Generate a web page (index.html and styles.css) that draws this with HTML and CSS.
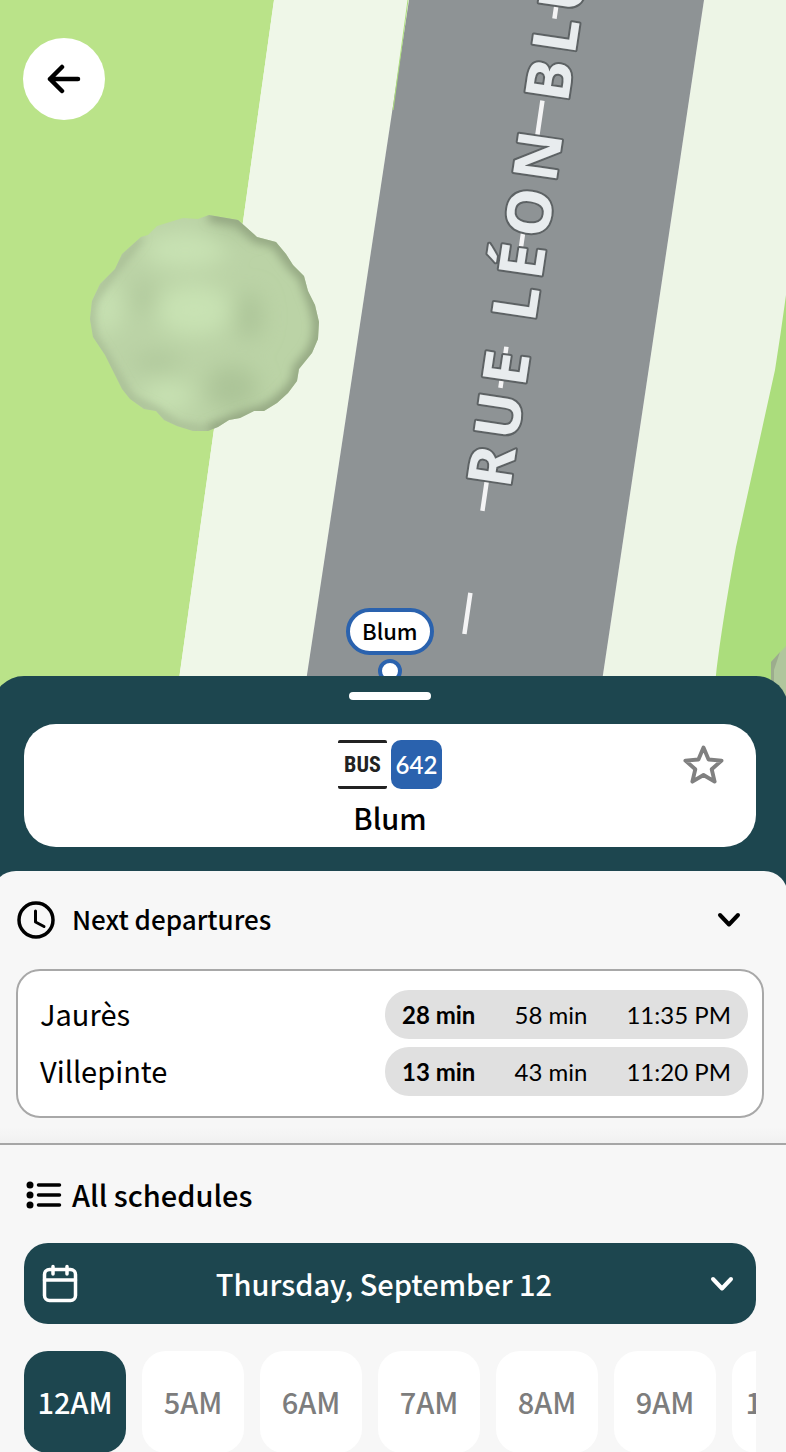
FILE: index.html
```html
<!DOCTYPE html>
<html lang="en">
<head>
<meta charset="utf-8">
<meta name="viewport" content="width=device-width, initial-scale=1">
<title>Blum – Bus 642</title>
<link rel="stylesheet" href="styles.css">
</head>
<body>
<main class="app">
  <section class="map" aria-label="Map">
    <svg class="map-canvas" viewBox="0 0 786 708" aria-hidden="true">
      <defs>
        <filter id="soft" x="-50%" y="-50%" width="200%" height="200%"><feGaussianBlur stdDeviation="11"/></filter>
        <filter id="rim" x="-10%" y="-10%" width="120%" height="120%"><feGaussianBlur stdDeviation="5"/></filter>
        <clipPath id="crown"><path d="M209 215L238 220L257 237L276 242L286 254L293 265L304 276L308 291L315 305L319 322L318 339L312 353L299 369L297 381L288 393L277 403L264 411L254 411L240 418L229 420L218 427L208 431L193 431L177 426L164 420L156 411L144 409L130 399L122 389L105 355L93 337L90 319L92 301L100 284L115 269L122 254L141 237L148 235L157 226L183 218L198 219Z"/></clipPath>
      </defs>
      <path class="grass" d="M0 0H274L175 708H0Z"/>
      <path class="path-left" d="M274 0H409L302 708H175Z"/>
      <path class="path-right" d="M704 0H786V708H598Z"/>
      <path class="grass-right" d="M786 295Q781 332 775 370L736 547C728 590 720 640 716 675L712 708H786Z"/>
      <path class="road" d="M409 0H704L598 708H302Z"/>
      <path class="verge" d="M408 0L393 110"/>
      <path class="lane" d="M464.4 634L563 -40"/>
      <g clip-path="url(#crown)">
        <rect class="leaf" x="85" y="210" width="240" height="226"/>
        <g filter="url(#soft)">
          <ellipse class="leaf-light" cx="185" cy="250" rx="42" ry="18"/>
          <ellipse class="leaf-light" cx="194" cy="310" rx="38" ry="26"/>
          <ellipse class="leaf-light" cx="107" cy="308" rx="14" ry="26"/>
          <ellipse class="leaf-light" cx="168" cy="396" rx="26" ry="14"/>
          <ellipse class="leaf-dark" cx="249" cy="316" rx="13" ry="24"/>
          <ellipse class="leaf-dark" cx="232" cy="388" rx="26" ry="22"/>
          <ellipse class="leaf-dark" cx="145" cy="298" rx="8" ry="16"/>
          <ellipse class="leaf-dark" cx="157" cy="362" rx="24" ry="7"/>
          <ellipse class="leaf-dark" cx="232" cy="224" rx="26" ry="10"/>
        </g>
        <path class="leaf-rim" filter="url(#rim)" d="M209 215L238 220L257 237L276 242L293 265L304 276L315 305L319 322L318 339L312 353L299 369L297 381L288 393L277 403L264 411L240 418L208 431"/>
        <path class="leaf-rim-thin" filter="url(#rim)" d="M208 431L177 426L156 411L130 399L105 355L93 337L90 319L92 301L115 269L141 237"/>
      </g>
      <path class="leaf-small" d="M786 646L771 662V686L786 700Z"/>
      <path class="leaf-small-shade" d="M780 652L771 662V686L774 689V670Z"/>
      <text class="street" transform="translate(510 489) rotate(-81.5)">RUE LÉON BLUM</text>
    </svg>
    <button class="back" type="button" aria-label="Back">
      <svg class="icon-arrow" viewBox="0 0 34 30" aria-hidden="true"><path d="M31 15H3M15 3L3 15L15 27"/></svg>
    </button>
    <div class="pin">
      <span class="pin-label">Blum</span>
      <span class="pin-dot"></span>
    </div>
  </section>

  <section class="sheet">
    <div class="handle"></div>
    <header class="stop">
      <div class="line">
        <span class="mode">BUS</span>
        <span class="number">642</span>
      </div>
      <h1 class="stop-name">Blum</h1>
      <button class="favorite" type="button" aria-label="Add to favorites">
        <svg class="icon-star" viewBox="0 0 42 40" aria-hidden="true"><path d="M21 2.5L26.2 14.8L39.5 16L29.4 24.8L32.4 37.5L21 30.7L9.6 37.5L12.6 24.8L2.5 16L15.8 14.8Z"/></svg>
      </button>
    </header>

    <div class="panel">
      <section class="next">
        <h2 class="section-title">
          <button class="toggle" type="button" aria-expanded="true">
            <svg class="icon-clock" viewBox="0 0 38 38" aria-hidden="true"><circle cx="19" cy="19" r="17"/><path d="M18.5 10V21L27 25.5"/></svg>
            <span class="toggle-text">Next departures</span>
            <svg class="icon-chevron" viewBox="0 0 24 16" aria-hidden="true"><path d="M3 3L12 12.5L21 3"/></svg>
          </button>
        </h2>
        <ul class="departures">
          <li class="departure">
            <span class="destination">Jaurès</span>
            <span class="times"><strong>28 min</strong><span>58 min</span><span>11:35 PM</span></span>
          </li>
          <li class="departure">
            <span class="destination">Villepinte</span>
            <span class="times"><strong>13 min</strong><span>43 min</span><span>11:20 PM</span></span>
          </li>
        </ul>
      </section>

      <section class="schedules">
        <h2 class="schedules-title">
          <svg class="icon-list" viewBox="0 0 36 30" aria-hidden="true"><circle cx="4" cy="5" r="3.5"/><circle cx="4" cy="15" r="3.5"/><circle cx="4" cy="25" r="3.5"/><path d="M12.5 5H33.5M12.5 15H33.5M12.5 25H33.5"/></svg>
          <span class="schedules-text">All schedules</span>
        </h2>
        <button class="date" type="button">
          <svg class="icon-calendar" viewBox="0 0 36 40" aria-hidden="true"><rect x="2.5" y="5.5" width="31" height="31" rx="5"/><path d="M2.5 16H33.5M11 2.5V10M25 2.5V10"/></svg>
          <span class="date-text">Thursday, September 12</span>
          <svg class="icon-chevron" viewBox="0 0 24 16" aria-hidden="true"><path d="M3 3L12 12.5L21 3"/></svg>
        </button>
        <div class="hours">
          <button class="hour hour-active" type="button">12AM</button>
          <button class="hour" type="button">5AM</button>
          <button class="hour" type="button">6AM</button>
          <button class="hour" type="button">7AM</button>
          <button class="hour" type="button">8AM</button>
          <button class="hour" type="button">9AM</button>
          <button class="hour" type="button">10AM</button>
        </div>
      </section>
    </div>
  </section>
</main>
</body>
</html>
```
FILE: styles.css
```css
:root {
  --teal: #1d464f;
  --blue: #2a62ae;
  --surface: #f7f7f7;
  --sans: "Noto Sans CJK SC", "Noto Sans", sans-serif;
  --lato: Lato, sans-serif;
}

* { box-sizing: border-box; }

body {
  margin: 0;
  overflow: hidden;
  background: var(--surface);
  color: #000;
  font-family: var(--sans);
  font-size: 29px;
  line-height: 40px;
}

h1, h2, ul { margin: 0; padding: 0; font-size: 29px; font-weight: 500; }
ul { list-style: none; }
button { margin: 0; padding: 0; border: 0; background: none; color: inherit; font: inherit; cursor: pointer; }
svg { display: block; flex: none; }

.app { overflow: hidden; }

/* Map */
.map { position: relative; }
.map-canvas { width: 100%; height: auto; }
.grass { fill: #bae389; }
.path-left { fill: #eff7e8; }
.path-right { fill: #edf5e6; }
.grass-right { fill: #abdd7c; }
.road { fill: #8e9395; }
.verge { fill: none; stroke: #abdd7c; stroke-width: 1; }
.lane { fill: none; stroke: #f4f4f5; stroke-width: 4.5; stroke-dasharray: 41.5 82.9; }
.leaf { fill: #bbd3a6; }
.leaf-light { fill: #c8e2b3; }
.leaf-dark { fill: #acc498; }
.leaf-rim { fill: none; stroke: #93a681; stroke-width: 12; }
.leaf-rim-thin { fill: none; stroke: #9db08b; stroke-width: 5; }
.leaf-small { fill: #b0c69d; }
.leaf-small-shade { fill: #9cac8d; }
.street {
  fill: #e8ecee;
  stroke: #5d6264;
  stroke-width: 4;
  stroke-linejoin: round;
  paint-order: stroke;
  font-family: "Noto Sans", sans-serif;
  font-size: 61px;
  font-weight: 700;
  letter-spacing: 8px;
}

.back {
  position: absolute;
  top: 38px;
  left: 23px;
  display: grid;
  place-items: center;
  width: 82px;
  height: 82px;
  border-radius: 50%;
  background: #fff;
}
.icon-arrow { width: 34px; fill: none; stroke: #000; stroke-width: 4.5; stroke-linecap: round; stroke-linejoin: round; }

.pin {
  position: absolute;
  left: 346px;
  top: 608px;
  display: flex;
  flex-direction: column;
  align-items: center;
  gap: 4px;
}
.pin-label {
  padding: 0 12px 3px;
  border: 4px solid var(--blue);
  border-radius: 24px;
  background: #fff;
  font-size: 22px;
  font-weight: 500;
  line-height: 36px;
}
.pin-dot { width: 24px; height: 24px; border: 4px solid var(--blue); border-radius: 50%; background: #fff; }

/* Bottom sheet */
.sheet {
  position: relative;
  display: flex;
  flex-direction: column;
  margin: -32px -2px 0 -8px;
  padding-top: 16px;
  border-radius: 32px 32px 0 0;
  background: var(--teal);
}
.handle { align-self: center; width: 82px; height: 8px; border-radius: 4px; background: #fff; }

.stop {
  position: relative;
  display: flex;
  flex-direction: column;
  align-items: center;
  gap: 8px;
  margin: 24px 32px;
  padding: 16px 32px 10px;
  border-radius: 32px;
  background: #fff;
}
.line { display: flex; gap: 4px; }
.mode {
  display: grid;
  place-items: center;
  width: 49px;
  height: 49px;
  border-top: 3px solid #222;
  border-bottom: 3px solid #222;
  border-radius: 2px;
  color: #222;
  font-family: "Roboto Condensed", "Liberation Sans Narrow", sans-serif;
  font-size: 22px;
  font-weight: 700;
}
.number {
  display: grid;
  place-items: center;
  width: 51px;
  height: 49px;
  border-radius: 10px;
  background: var(--blue);
  color: #fff;
  font-family: var(--lato);
  font-size: 24px;
  font-weight: 600;
}
.favorite { position: absolute; top: 21px; right: 32px; }
.icon-star { width: 41px; fill: none; stroke: #808080; stroke-width: 4; stroke-linejoin: round; }

.panel { border-radius: 24px 24px 0 0; background: var(--surface); }

/* Next departures */
.next {
  padding: 24px 24px 25px;
  border-bottom: 2px solid #a6a6a6;
  background: linear-gradient(to top, #f1f1f1, #f7f7f700 16px);
}
.section-title { font-size: 26px; }
.toggle { display: flex; align-items: center; gap: 17px; width: 100%; height: 50px; padding: 0 23px 0 1px; text-align: left; }
.toggle-text { flex: 1; padding-bottom: 2px; }
.icon-clock { width: 38px; fill: none; stroke: #000; stroke-width: 3.5; stroke-linecap: round; stroke-linejoin: round; }
.icon-clock path { stroke-width: 3; }
.icon-chevron { width: 24px; fill: none; stroke: currentColor; stroke-width: 4; stroke-linecap: round; stroke-linejoin: round; }

.departures {
  display: flex;
  flex-direction: column;
  gap: 8px;
  margin-top: 24px;
  padding: 19px 14px 20px 22px;
  border: 2px solid #a8a8a8;
  border-radius: 24px;
  background: #fff;
  font-weight: 400;
}
.departure { display: flex; align-items: center; justify-content: space-between; }
.destination { padding-bottom: 4px; }
.times {
  display: flex;
  align-items: center;
  justify-content: space-between;
  width: 363px;
  height: 49px;
  padding: 0 17px;
  border-radius: 24px;
  background: #e0e0e0;
  font-family: var(--lato);
  font-size: 24px;
}

/* All schedules */
.schedules { padding: 29px 32px 0; }
.schedules-title { display: flex; align-items: center; gap: 10px; padding-left: 2px; }
.schedules-text { padding-bottom: 2px; }
.icon-list { width: 36px; stroke: #000; stroke-width: 3.5; stroke-linecap: round; }
.icon-list circle { stroke: none; }

.date {
  display: flex;
  align-items: center;
  width: 100%;
  height: 81px;
  margin-top: 27px;
  padding: 0 22px 0 18px;
  border-radius: 24px;
  background: var(--teal);
  color: #fff;
  font-weight: 500;
}
.date-text { flex: 1; padding: 0 20px 2px 0; }
.icon-calendar { width: 36px; fill: none; stroke: #fff; stroke-width: 3.5; stroke-linecap: round; stroke-linejoin: round; }

.hours { display: flex; gap: 16px; margin-top: 27px; overflow: hidden; }
.hour { flex: none; width: 102px; height: 102px; padding-bottom: 2px; border-radius: 24px; background: #fff; color: #7d7d7d; font-weight: 500; }
.hour-active { background: var(--teal); color: #fff; }
```
